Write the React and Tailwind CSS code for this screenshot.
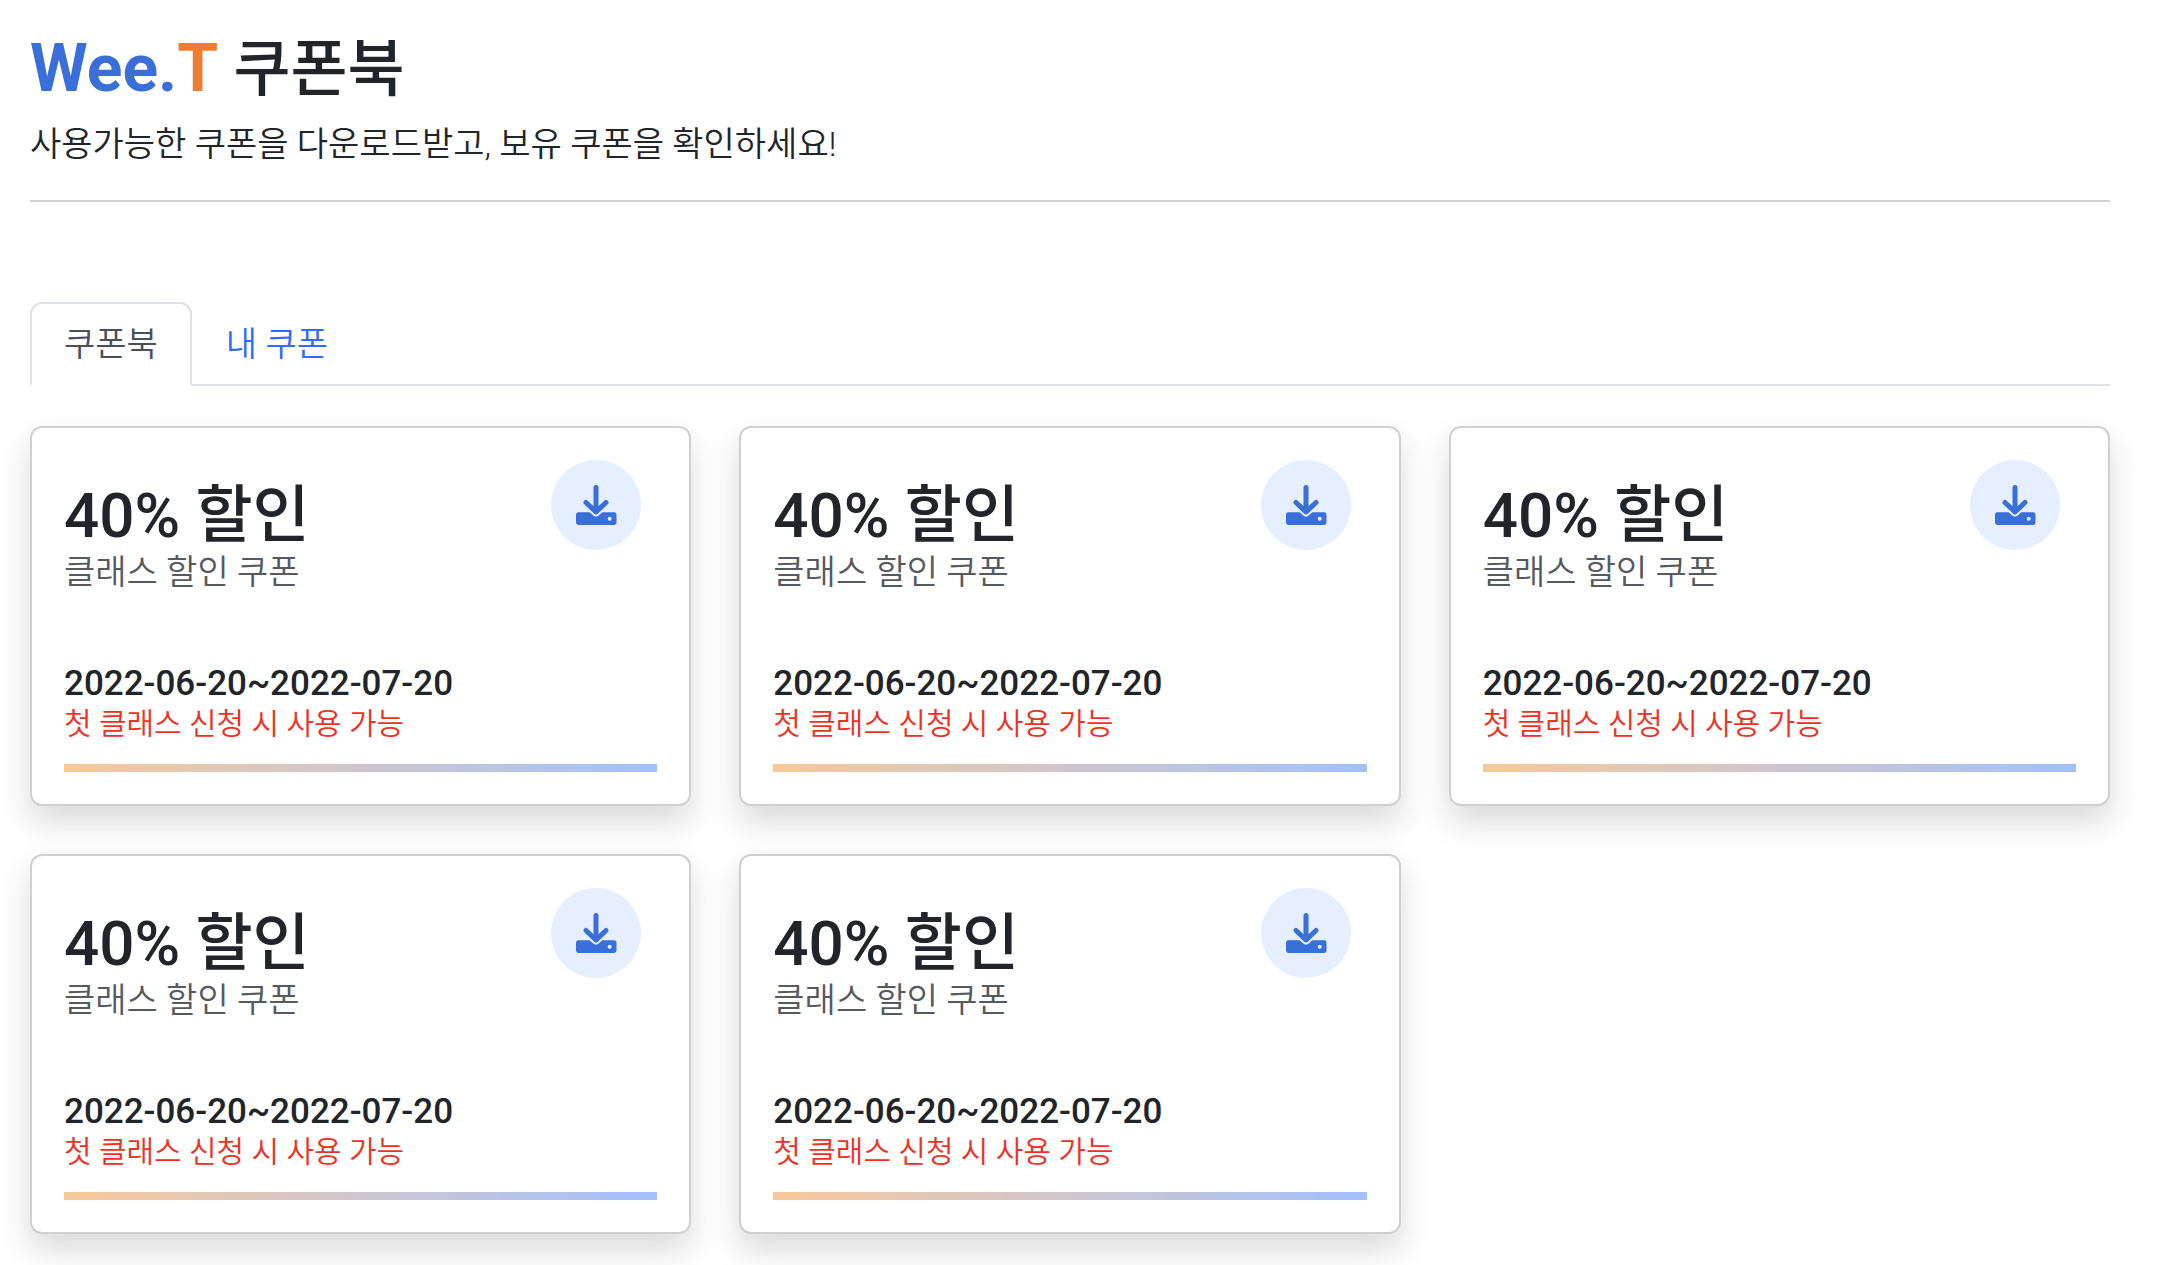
import React, { useState } from 'react';

const coupons = [
    { id: 1, title: '40% 할인', name: '클래스 할인 쿠폰', period: '2022-06-20~2022-07-20', condition: '첫 클래스 신청 시 사용 가능' },
    { id: 2, title: '40% 할인', name: '클래스 할인 쿠폰', period: '2022-06-20~2022-07-20', condition: '첫 클래스 신청 시 사용 가능' },
    { id: 3, title: '40% 할인', name: '클래스 할인 쿠폰', period: '2022-06-20~2022-07-20', condition: '첫 클래스 신청 시 사용 가능' },
    { id: 4, title: '40% 할인', name: '클래스 할인 쿠폰', period: '2022-06-20~2022-07-20', condition: '첫 클래스 신청 시 사용 가능' },
    { id: 5, title: '40% 할인', name: '클래스 할인 쿠폰', period: '2022-06-20~2022-07-20', condition: '첫 클래스 신청 시 사용 가능' },
];

const tabs = [
    { id: 'book', label: '쿠폰북' },
    { id: 'mine', label: '내 쿠폰' },
];

const DownloadIcon = () => (
    <svg width="42" height="42" viewBox="0 0 42 42" fill="none" aria-hidden="true">
        <rect x="1" y="28.3" width="40.5" height="12.7" rx="2.4" fill="currentColor" />
        <circle cx="34.7" cy="34.7" r="2" fill="#e5efff" />
        {/* gap between the arrow and the tray */}
        <path d="M11 18.5L21 28L31 18.5" stroke="#e5efff" strokeWidth="9" strokeLinejoin="round" />
        <path d="M21 3.5V27M11 18.5L21 28L31 18.5" stroke="currentColor" strokeWidth="5" strokeLinecap="round" strokeLinejoin="round" />
        <path d="M14 21.5L21 28L28 21.5L21 24Z" fill="currentColor" />
    </svg>
);

const CouponCard = ({ coupon }) => (
    <article className="rounded-xl border-2 border-[#d0d0d0] bg-white p-8 shadow-[0_16px_32px_rgba(0,0,0,0.15)]">
        <div className="flex items-start justify-between pr-4">
            <div className="pt-5">
                <h2 className="text-[62px] leading-[72px] font-medium">{coupon.title}</h2>
                <p className="text-[34px] leading-10 font-[350] text-[#555a5f]">{coupon.name}</p>
            </div>
            <button
                type="button"
                aria-label="쿠폰 다운로드"
                className="flex size-[90px] shrink-0 items-center justify-center rounded-full bg-[#e5efff] text-[#3a6fda]"
            >
                <DownloadIcon />
            </button>
        </div>
        <p className="mt-[72px] text-[35px] leading-10 font-medium">{coupon.period}</p>
        <p className="text-[30px] leading-10 font-[350] text-[#ef3124]">{coupon.condition}</p>
        <div className="mt-5 h-2 bg-linear-to-r from-[#f8c899] to-[#a1c0fc]" />
    </article>
);

const App = () => {
    const [activeTab, setActiveTab] = useState('book');

    return (
        <main className="pt-8 pr-[65px] pb-8 pl-[30px] font-['Roboto','Noto_Sans_CJK_KR',sans-serif] text-[#212529]">
            <header className="border-b-2 border-[#d0d0d0] pb-8">
                <h1 className="text-[62px] leading-[76px] font-medium">
                    <span className="text-[66px] leading-none font-bold text-[#3a6fda]">Wee.</span>
                    <span className="text-[66px] leading-none font-bold text-[#ee7d31]">T</span> 쿠폰북
                </h1>
                <p className="mt-3 text-[34px] leading-[48px] font-[350]">사용가능한 쿠폰을 다운로드받고, 보유 쿠폰을 확인하세요!</p>
            </header>

            <div role="tablist" className="mt-[100px] flex border-b-2 border-[#dee2e6]">
                {tabs.map(tab => (
                    <button
                        key={tab.id}
                        type="button"
                        role="tab"
                        aria-selected={activeTab === tab.id}
                        onClick={() => setActiveTab(tab.id)}
                        className={`-mb-0.5 rounded-t-xl border-2 px-8 py-4 text-[34px] leading-[48px] font-[350] ${activeTab === tab.id ? 'border-[#dee2e6] border-b-white bg-white text-[#495057]' : 'border-transparent text-[#2f6bff]'}`}
                    >
                        {tab.label}
                    </button>
                ))}
            </div>

            <section className="mt-10 grid grid-cols-3 gap-12">
                {(activeTab === 'book' ? coupons : []).map(coupon => (
                    <CouponCard key={coupon.id} coupon={coupon} />
                ))}
            </section>
        </main>
    );
};

export default App;
